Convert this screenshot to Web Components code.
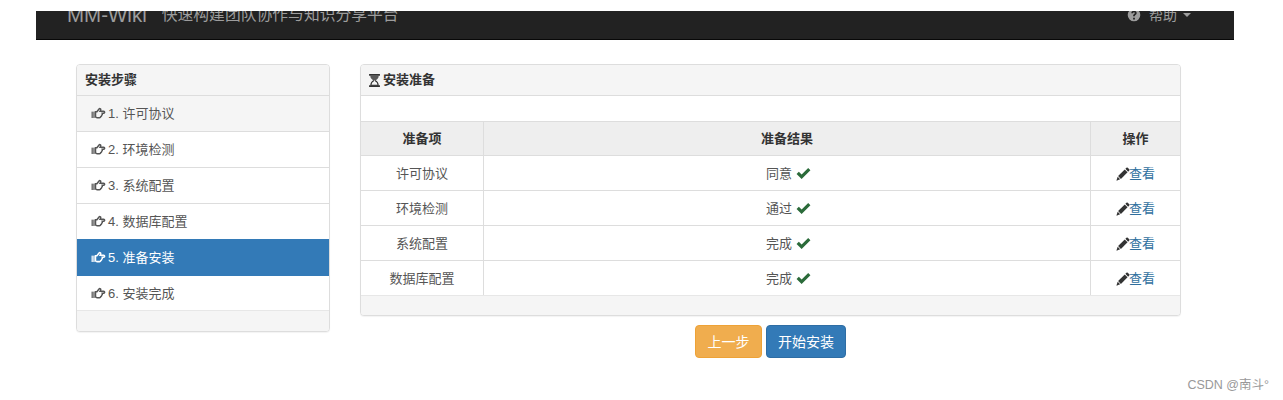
<!DOCTYPE html>
<html lang="zh">
<head>
<meta charset="utf-8">
<title>MM-Wiki</title>
<style>
  html, body { margin: 0; height: 400px; overflow: hidden; background: #fff; }
  body {
    position: relative;
    font: 13px/18px "Liberation Sans", "Noto Sans CJK SC", sans-serif;
    color: #333;
  }
</style>
</head>
<body>
<install-page></install-page>
<csdn-mark>CSDN @南斗°</csdn-mark>

<script>
const ICONS = {
  hand: '<path fill="none" stroke="currentColor" stroke-width="1.6" d="M4.800 6.200h1.500l2.300-3c.6-.8 1.800-.5 1.800.5 0 .6-.2 1.200-.6 1.800h3.700c1.400 0 1.400 2.300 0 2.300h-1.500c.3.900 0 1.700-.6 2.100 0 .8-.4 1.300-1 1.500-.2.7-.7 1-1.300 1H6.600c-.7 0-1.100-.3-1.800-.7z"/><rect x=".6" y="6" width="1.300" height="6.800" fill="currentColor"/><rect x="2.500" y="6" width="1.300" height="6.800" fill="currentColor"/>',
  hourglass: '<path fill="currentColor" d="M2.200 1h11.600v1.900H2.200zM2.200 13.100h11.600V15H2.200z"/><path fill="currentColor" opacity=".8" d="M3.500 2.900h9c0 2.700-1.900 4-3.700 5.100h-1.600C5.400 6.900 3.500 5.600 3.500 2.900z"/><path fill="none" stroke="currentColor" stroke-width="1.200" d="M7.400 8C5.500 9 4.100 10.600 4.100 13.100h7.800C11.900 10.600 10.500 9 8.600 8"/>',
  ok: '<path fill="currentColor" d="M.6 8.400 3 6 6 9 13 2l2.400 2.400L6 13.800z"/>',
  pencil: '<path fill="currentColor" d="M12 .8c.4-.4 1-.4 1.400 0l1.800 1.800c.4.4.4 1 0 1.400l-1.300 1.300-3.200-3.200z"/><path fill="currentColor" d="M10 2.800l3.200 3.200-7.600 7.600-3.200-3.200z"/><path fill="currentColor" d="M1.900 11.200l2.900 2.900L.4 15.600z"/>',
  question: '<path fill="currentColor" fill-rule="evenodd" d="M8 .8a7.200 7.200 0 1 1 0 14.400A7.200 7.200 0 0 1 8 .8zM7 11v2h2v-2zM8 3.200c-1.700 0-3 .9-3.100 2.700h1.900c.1-.7.500-1.100 1.200-1.100.6 0 1 .3 1 .9 0 .5-.3.800-.8 1.200-.9.600-1.200 1.100-1.200 2.500h1.900c0-.8.200-1.100.8-1.500.8-.6 1.300-1.200 1.300-2.300C11 4.100 9.700 3.200 8 3.200z"/>'
};

// small glyph element, the name picks the drawing
class GlyphIcon extends HTMLElement {
  connectedCallback() {
    const size = this.getAttribute('size') || 14;
    this.shadowRoot || this.attachShadow({ mode: 'open' });
    this.shadowRoot.innerHTML = `
      <style>
        :host { display: inline-flex; flex: none; }
        svg { display: block; }
      </style>
      <svg width="${size}" height="${size}" viewBox="0 0 16 16">${ICONS[this.getAttribute('name')]}</svg>`;
  }
}

const navTemplate = document.createElement('template');
navTemplate.innerHTML = `
<style>
  :host {
    display: block;
    margin: 11px 49px 0 36px;
    height: 28px;
    background: #222;
    border-bottom: 1px solid #080808;
    overflow: hidden;
    color: #9d9d9d;
  }
  .inner {
    display: flex;
    align-items: center;
    height: 50px;
    margin-top: -21px;
    padding: 0 43px 0 31px;
  }
  .brand { font-size: 20.5px; }
  .motto { margin-left: 15px; font-size: 15.8px; }
  .help { margin-left: auto; display: flex; align-items: center; font-size: 14px; }
  .help span { margin-left: 8px; }
  .caret {
    margin-left: 6px;
    border-top: 4px solid #9d9d9d;
    border-left: 4px solid transparent;
    border-right: 4px solid transparent;
  }
</style>
<div class="inner">
  <span class="brand">MM-Wiki</span>
  <span class="motto">快速构建团队协作与知识分享平台</span>
  <div class="help">
    <glyph-icon name="question" size="14"></glyph-icon>
    <span>帮助</span>
    <i class="caret"></i>
  </div>
</div>
`;

class AppNavbar extends HTMLElement {
  constructor() {
    super();
    this.attachShadow({ mode: 'open' }).appendChild(navTemplate.content.cloneNode(true));
  }
}

const panelTemplate = document.createElement('template');
panelTemplate.innerHTML = `
<style>
  :host {
    display: block;
    box-sizing: border-box;
    border: 1px solid #ddd;
    border-radius: 4px;
    box-shadow: 0 1px 1px rgba(0,0,0,.05);
    overflow: hidden;
    background: #fff;
  }
  header {
    display: flex;
    align-items: center;
    gap: 2px;
    height: 30px;
    padding: 0 8px;
    background: #f5f5f5;
    border-bottom: 1px solid #ddd;
    font-weight: bold;
    color: #333;
  }
  footer { height: var(--footer-height, 20px); background: #f5f5f5; border-top: 1px solid #e7e7e7; }
</style>
<header><slot name="icon"></slot><slot name="title"></slot></header>
<slot></slot>
<footer></footer>
`;

class InfoPanel extends HTMLElement {
  constructor() {
    super();
    this.attachShadow({ mode: 'open' }).appendChild(panelTemplate.content.cloneNode(true));
  }
}

const stepTemplate = document.createElement('template');
stepTemplate.innerHTML = `
<style>
  :host {
    display: flex;
    align-items: center;
    gap: 2px;
    box-sizing: border-box;
    height: 36px;
    padding: 0 14px;
    border-bottom: 1px solid #ddd;
    background: #fff;
    color: #555;
  }
  :host([first]) { background: #f5f5f5; }
  :host([active]) {
    height: 37px;
    margin-top: -1px;
    padding-top: 1px;
    background: #337ab7;
    border-bottom-color: #337ab7;
    color: #fff;
  }
  :host(:last-child) { border-bottom: 0; height: 34px; padding-top: 1px; }
</style>
<glyph-icon name="hand" size="15"></glyph-icon><slot></slot>
`;

class StepItem extends HTMLElement {
  constructor() {
    super();
    this.attachShadow({ mode: 'open' }).appendChild(stepTemplate.content.cloneNode(true));
  }
}

const rowTemplate = document.createElement('template');
rowTemplate.innerHTML = `
<style>
  :host {
    display: grid;
    grid-template-columns: 122px 607px 1fr;
    height: 35px;
    box-sizing: border-box;
    border-bottom: 1px solid #ddd;
    color: #555;
  }
  :host(:last-child) { border-bottom: 0; height: 34px; }
  :host([head]) { background: #eee; font-weight: bold; color: #333; border-top: 1px solid #ddd; }
  .cell {
    display: flex;
    align-items: center;
    justify-content: center;
    gap: 4px;
    padding-top: 1px;
    border-left: 1px solid #ddd;
  }
  :host([head]) .cell { padding-top: 0; }
  .cell:first-of-type { border-left: 0; }
</style>
<div class="cell"><slot name="item"></slot></div>
<div class="cell"><slot name="result"></slot></div>
<div class="cell"><slot name="action"></slot></div>
`;

class SummaryRow extends HTMLElement {
  constructor() {
    super();
    this.attachShadow({ mode: 'open' }).appendChild(rowTemplate.content.cloneNode(true));
  }
}

const btnTemplate = document.createElement('template');
btnTemplate.innerHTML = `
<style>
  :host {
    display: inline-flex;
    align-items: center;
    box-sizing: border-box;
    height: 33px;
    padding: 0 11px;
    border: 1px solid #2e6da4;
    border-radius: 4px;
    background: #337ab7;
    color: #fff;
    font-size: 14px;
  }
  :host([kind="warning"]) { background: #f0ad4e; border-color: #eea236; padding: 0 11.5px; }
</style>
<slot></slot>
`;

class ActionButton extends HTMLElement {
  constructor() {
    super();
    this.attachShadow({ mode: 'open' }).appendChild(btnTemplate.content.cloneNode(true));
  }
}

const pageTemplate = document.createElement('template');
pageTemplate.innerHTML = `
<style>
  :host { display: block; }
  .main {
    display: grid;
    grid-template-columns: 254px 821px;
    column-gap: 30px;
    margin: 24px 0 0 76px;
    align-items: start;
  }
  .spacer { height: 25px; }
  .ready { --footer-height: 19px; }
  .hourglass { margin: 0 -1px 0 -2px; }
  .check { color: #2b6b3a; margin-right: -3px; }
  .look { color: #2f6f9e; }
  .edit { display: inline-flex; align-items: center; color: #333; }
  .edit glyph-icon { margin-right: -1px; }
  .actions {
    display: flex;
    justify-content: center;
    gap: 4px;
    margin-top: 9px;
  }
  .steps-title, .ready-title { font-weight: bold; }
</style>
<app-navbar></app-navbar>
<div class="main">
  <info-panel>
    <span slot="title" class="steps-title">安装步骤</span>
    <step-item first>1. 许可协议</step-item>
    <step-item>2. 环境检测</step-item>
    <step-item>3. 系统配置</step-item>
    <step-item>4. 数据库配置</step-item>
    <step-item active>5. 准备安装</step-item>
    <step-item>6. 安装完成</step-item>
  </info-panel>
  <div>
    <info-panel class="ready">
      <glyph-icon slot="icon" class="hourglass" name="hourglass" size="15"></glyph-icon>
      <span slot="title" class="ready-title">安装准备</span>
      <div class="spacer"></div>
      <div id="rows"></div>
    </info-panel>
    <div class="actions">
      <action-button kind="warning">上一步</action-button>
      <action-button>开始安装</action-button>
    </div>
  </div>
</div>
`;

class InstallPage extends HTMLElement {
  constructor() {
    super();
    this.attachShadow({ mode: 'open' }).appendChild(pageTemplate.content.cloneNode(true));
    this.renderRows([
      ['许可协议', '同意'],
      ['环境检测', '通过'],
      ['系统配置', '完成'],
      ['数据库配置', '完成'],
    ]);
  }

  renderRows(rows) {
    let html = `<summary-row head>
      <span slot="item">准备项</span><span slot="result">准备结果</span><span slot="action">操作</span>
    </summary-row>`;
    rows.forEach(([item, result]) => {
      html += `<summary-row>
        <span slot="item">${item}</span>
        <span slot="result">${result}</span>
        <glyph-icon slot="result" class="check" name="ok" size="15"></glyph-icon>
        <span slot="action" class="edit"><glyph-icon name="pencil" size="14"></glyph-icon><span class="look">查看</span></span>
      </summary-row>`;
    });
    this.shadowRoot.querySelector('#rows').innerHTML = html;
  }
}

class CsdnMark extends HTMLElement {
  constructor() {
    super();
    this.attachShadow({ mode: 'open' }).innerHTML = `
      <style>
        :host { position: absolute; right: 14px; top: 376px; font-size: 12.5px; color: #999; }
      </style>
      <slot></slot>`;
  }
}

customElements.define('glyph-icon', GlyphIcon);
customElements.define('app-navbar', AppNavbar);
customElements.define('info-panel', InfoPanel);
customElements.define('step-item', StepItem);
customElements.define('summary-row', SummaryRow);
customElements.define('action-button', ActionButton);
customElements.define('install-page', InstallPage);
customElements.define('csdn-mark', CsdnMark);
</script>
</body>
</html>
